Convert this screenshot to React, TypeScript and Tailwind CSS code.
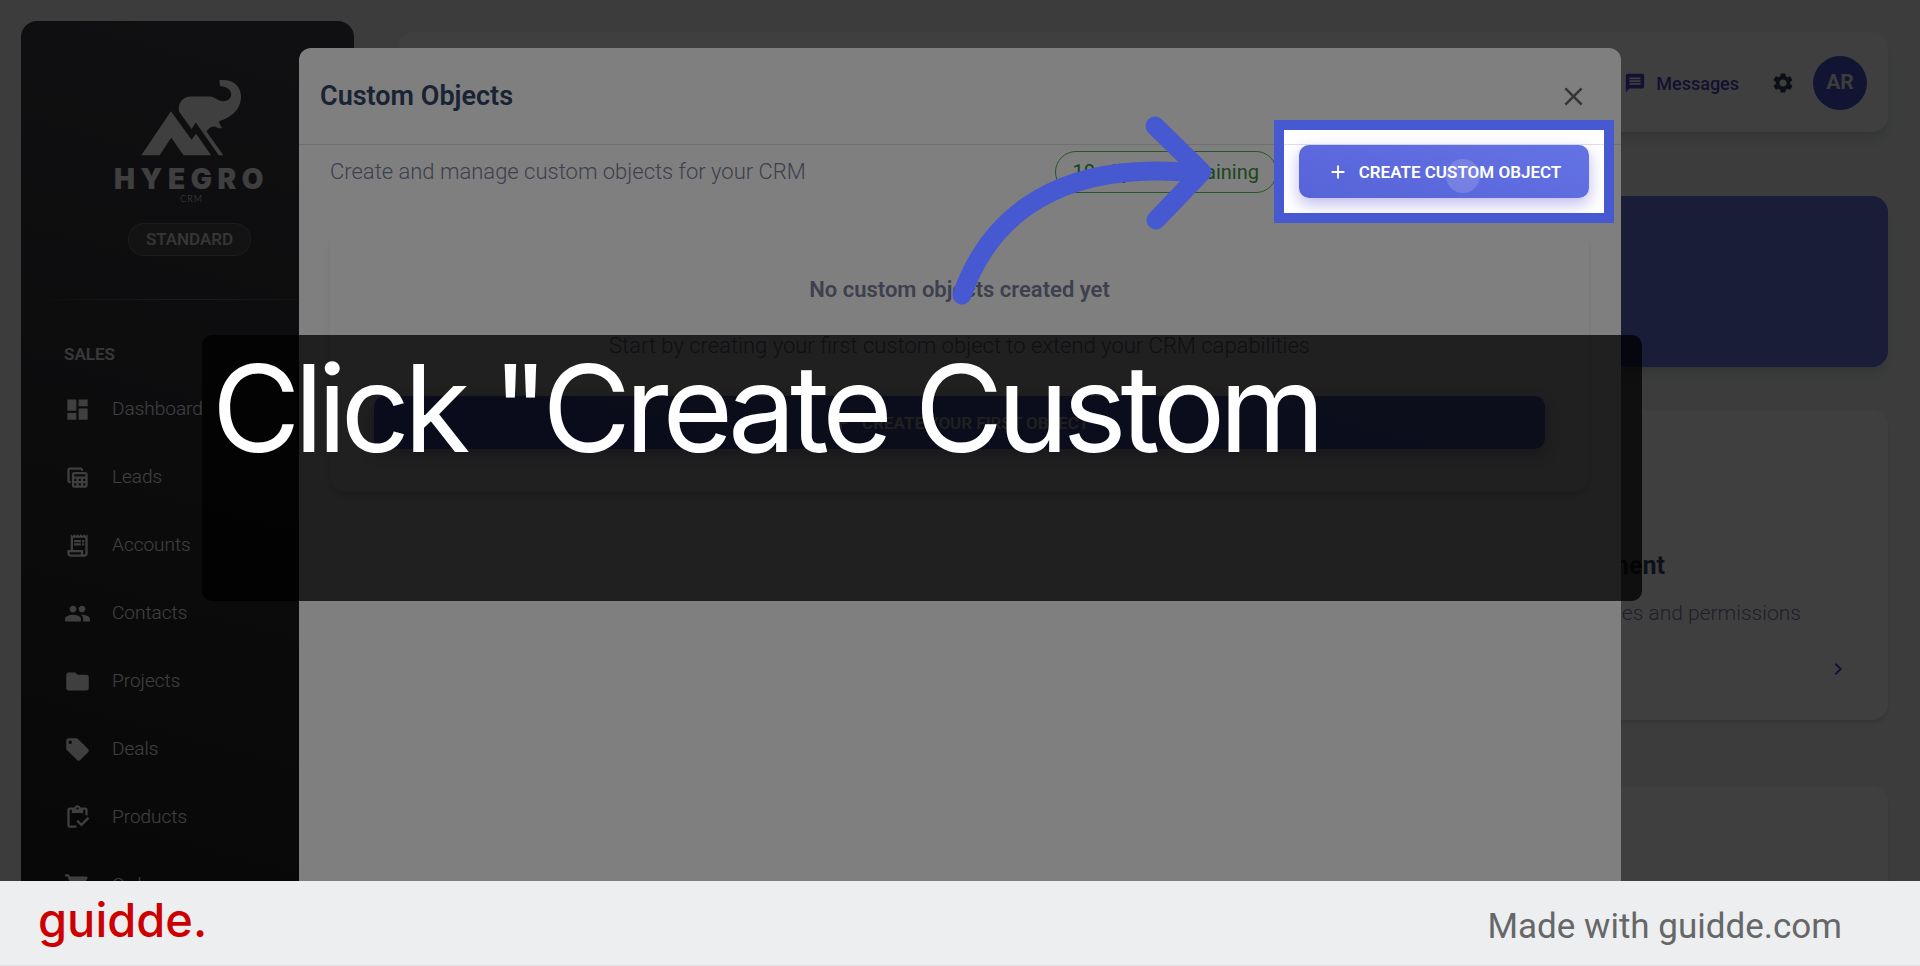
import type { ReactNode } from "react";
import type { IconType } from "react-icons";
import {
  MdAdd,
  MdChevronRight,
  MdClose,
  MdDashboard,
  MdFolder,
  MdLocalOffer,
  MdMessage,
  MdOutlineReceiptLong,
  MdPeople,
  MdSettings,
  MdShoppingCart,
  MdTableView,
} from "react-icons/md";

function ClipboardCheck({ className }: { className?: string }) {
  return (
    <svg viewBox="0 0 24 24" fill="currentColor" className={className} aria-hidden="true">
      <path d="M5 5h2v3h10V5h2v5h2V5c0-1.1-.9-2-2-2h-4.18C14.4 1.84 13.3 1 12 1s-2.4.84-2.82 2H5c-1.1 0-2 .9-2 2v14c0 1.1.9 2 2 2h6v-2H5V5zm7-2c.55 0 1 .45 1 1s-.45 1-1 1-1-.45-1-1 .45-1 1-1z" />
      <path d="M21 11.5 15.51 17l-3.01-3-1.5 1.51L15.51 20l6.99-7z" />
    </svg>
  );
}

const navItems: { label: string; icon: IconType | typeof ClipboardCheck }[] = [
  { label: "Dashboard", icon: MdDashboard },
  { label: "Leads", icon: MdTableView },
  { label: "Accounts", icon: MdOutlineReceiptLong },
  { label: "Contacts", icon: MdPeople },
  { label: "Projects", icon: MdFolder },
  { label: "Deals", icon: MdLocalOffer },
  { label: "Products", icon: ClipboardCheck },
  { label: "Orders", icon: MdShoppingCart },
];

function ElephantLogo() {
  return (
    <svg viewBox="105 25 308 232" className="h-[77px] w-[103px]" fill="currentColor" aria-hidden="true">
      <path d="M108 255 L197 122 L259 208 L273 190 L318 255 L235 255 L198 201 L163 255 Z" />
      <path d="M259 176 L222 124 C216 100 232 78 256 78 L314 78 C328 78 338 92 356 92 C384 92 392 50 345 46 L343 29 C386 24 411 50 408 84 C404 122 376 142 342 152 C343 162 347 168 352 173 C344 175 336 172 330 168 C318 168 310 174 304 183 L355 255 L341 255 L272 156 Z" />
    </svg>
  );
}

function Sidebar() {
  return (
    <aside className="ml-[21px] mt-[21px] w-[333px] shrink-0 self-stretch rounded-t-2xl bg-linear-[195deg] from-[#42424a] to-[#191919] text-white">
      <div className="flex flex-col items-center pl-2 pt-[58px]">
        <ElephantLogo />
        <div className="mt-[9px] font-['Inter',sans-serif] text-[28px] font-black leading-7 tracking-[0.2em]">HYEGRO</div>
        <div className="font-['Lato',sans-serif] text-[9px] font-light leading-3 tracking-widest">CRM</div>
      </div>
      <div className="mt-[18px] flex justify-center pl-1">
        <span className="rounded-full border border-white/20 bg-white/10 px-[17px] text-[17px] font-medium leading-[31px] text-white/80">STANDARD</span>
      </div>
      <div className="mt-[43px] h-px bg-linear-to-r from-transparent via-white/30 to-transparent" />
      <h2 className="mt-[42px] pl-[43px] text-[17px] font-semibold leading-6 text-white/85">SALES</h2>
      <nav className="mt-[9px]">
        {navItems.map(({ label, icon: Icon }) => (
          <a key={label} href={`#${label.toLowerCase()}`} className="flex h-[68px] items-center gap-[21px] pl-[43px] text-[19px] font-light">
            <Icon className="size-[27px]" />
            <span>{label}</span>
          </a>
        ))}
      </nav>
    </aside>
  );
}

function SettingsCard({ title, text }: { title?: string; text?: string }) {
  return (
    <article className="h-[310px] rounded-2xl bg-white px-[38px] pt-10 shadow-md">
      {title && (
        <>
          <div className="size-16 rounded-xl bg-[#6874e0]" />
          <h3 className="mt-9 text-[25px] font-bold leading-8 text-[#344767]">{title}</h3>
          <p className="mt-[15px] text-[21px] font-light leading-8 text-[#7b809a]">{text}</p>
          <div className="mt-7 flex justify-end text-[#4f46e5]">
            <MdChevronRight className="size-6" />
          </div>
        </>
      )}
    </article>
  );
}

function Workspace() {
  return (
    <main className="ml-11 mr-8 mt-8 min-w-0 flex-1">
      <header className="flex h-[100px] items-center justify-end rounded-2xl bg-white/90 pr-[21px] pt-[2px] shadow-lg">
        <a href="#messages" className="mr-8 flex items-center gap-[10px] text-[18px] font-medium text-[#4f46c5]">
          <MdMessage className="size-[22px]" />
          Messages
        </a>
        <button type="button" aria-label="Settings" className="mr-[18px] text-[#2c3c58]">
          <MdSettings className="size-6" />
        </button>
        <button type="button" className="size-[54px] rounded-full bg-[#4850cc] text-[21px] font-bold text-[#f0f2f5]">
          AR
        </button>
      </header>
      <section className="mt-16 h-[171px] rounded-2xl bg-[#6874e0] shadow-lg" />
      <section className="mt-[43px] grid grid-cols-3 gap-x-11 gap-y-[66px]">
        <SettingsCard />
        <SettingsCard />
        <SettingsCard title="User Management" text="Manage users, roles and permissions" />
        <SettingsCard />
        <SettingsCard />
        <SettingsCard />
      </section>
    </main>
  );
}

function PrimaryButton({ children }: { children: ReactNode }) {
  return (
    <button
      type="button"
      className="flex h-[53px] w-full items-center justify-center gap-[10px] whitespace-nowrap rounded-[10px] bg-linear-[15deg] from-[#5763d8] to-[#6473e4] px-4 text-[17px] font-semibold leading-6 text-white shadow-[0_6px_16px_rgba(87,80,216,0.4)]"
    >
      <MdAdd className="size-[22px]" />
      {children}
    </button>
  );
}

function CustomObjectsDialog() {
  return (
    <div className="absolute inset-0 isolate flex justify-center bg-black/50 pt-12">
      <section role="dialog" aria-labelledby="dialog-title" className="h-full w-[1322px] max-w-full rounded-t-xl bg-white">
        <div className="flex h-[97px] items-center justify-between border-b border-[#dee0e2] pl-[21px] pr-8">
          <h1 id="dialog-title" className="text-[27px] font-semibold leading-9 text-[#344767]">
            Custom Objects
          </h1>
          <button type="button" aria-label="Close" className="text-[#6b6b6b]">
            <MdClose className="size-[31px]" />
          </button>
        </div>
        <div className="pl-[31px] pr-8">
          <div className="flex items-center">
            <p className="mr-auto text-[22px] font-light text-[#7b809a]">Create and manage custom objects for your CRM</p>
            <span className="mr-[22px] flex h-[42px] items-center rounded-full border border-[#4caf50] px-[17px] text-[20px] text-[#358c39]">
              10 objects remaining
            </span>
            <div className="relative w-[290px]">
              <PrimaryButton>CREATE CUSTOM OBJECT</PrimaryButton>
              <span className="pointer-events-none absolute left-[147px] top-[14px] size-[34px] rounded-full bg-white/15" />
              <span className="pointer-events-none absolute -inset-[25px] z-10 border-[10px] border-[#4759d1] shadow-[0_0_0_2400px_rgba(0,0,0,0.5)]" />
            </div>
          </div>
          <div className="mt-[31px] rounded-2xl px-11 pb-[43px] pt-11 text-center text-[22px] leading-[34px] text-[#7b809a] shadow-md">
            <h2 className="font-semibold">No custom objects created yet</h2>
            <p className="mb-[33px] mt-[22px] font-light">Start by creating your first custom object to extend your CRM capabilities</p>
            <PrimaryButton>CREATE YOUR FIRST OBJECT</PrimaryButton>
          </div>
        </div>
      </section>
    </div>
  );
}

function PointerArrow() {
  return (
    <svg
      viewBox="950 110 264 200"
      className="pointer-events-none absolute left-[950px] top-[110px] h-[200px] w-[264px]"
      fill="none"
      stroke="#4759d1"
      strokeWidth="19"
      strokeLinecap="round"
      strokeLinejoin="round"
      aria-hidden="true"
    >
      <path d="M962 295 C990 215 1060 160 1195 173" />
      <path d="M1155 126 L1202 172 L1156 220" />
    </svg>
  );
}

export default function App() {
  return (
    <div className="flex h-screen flex-col font-['Roboto',sans-serif]">
      <div className="relative min-h-0 flex-1 overflow-hidden bg-[#f0f2f5]">
        <div className="flex">
          <Sidebar />
          <Workspace />
        </div>
        <CustomObjectsDialog />
        <PointerArrow />
        <div className="absolute left-[202px] right-[278px] top-[335px] h-[266px] rounded-[10px] bg-black/75 px-[10px] pt-3">
          <p className="font-['Inter',sans-serif] text-[121px] leading-[122px] tracking-tighter text-white">Click "Create Custom</p>
        </div>
      </div>
      <footer className="flex h-[85px] shrink-0 items-center justify-between border-b border-[#dcdee0] bg-[#edeef0] pl-[38px] pr-[78px]">
        <a href="#guidde" className="pb-2 font-['Inter',sans-serif] text-[47px] font-medium leading-none text-[#cc0000]">
          guidde.
        </a>
        <span className="pt-2 text-[35px] text-[#666768]">Made with guidde.com</span>
      </footer>
    </div>
  );
}
